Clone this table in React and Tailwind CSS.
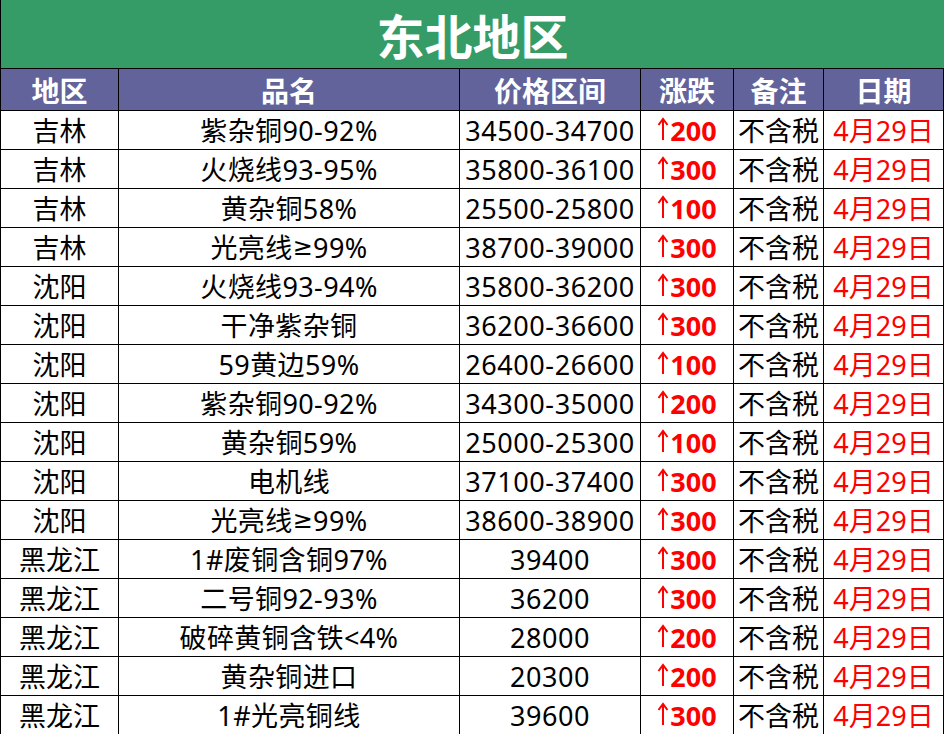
import React from "react";

const rows = [
  ["吉林", "紫杂铜90-92%", "34500-34700", "200"],
  ["吉林", "火烧线93-95%", "35800-36100", "300"],
  ["吉林", "黄杂铜58%", "25500-25800", "100"],
  ["吉林", "光亮线≥99%", "38700-39000", "300"],
  ["沈阳", "火烧线93-94%", "35800-36200", "300"],
  ["沈阳", "干净紫杂铜", "36200-36600", "300"],
  ["沈阳", "59黄边59%", "26400-26600", "100"],
  ["沈阳", "紫杂铜90-92%", "34300-35000", "200"],
  ["沈阳", "黄杂铜59%", "25000-25300", "100"],
  ["沈阳", "电机线", "37100-37400", "300"],
  ["沈阳", "光亮线≥99%", "38600-38900", "300"],
  ["黑龙江", "1#废铜含铜97%", "39400", "300"],
  ["黑龙江", "二号铜92-93%", "36200", "300"],
  ["黑龙江", "破碎黄铜含铁<4%", "28000", "200"],
  ["黑龙江", "黄杂铜进口", "20300", "200"],
  ["黑龙江", "1#光亮铜线", "39600", "300"],
];

const headers = ["地区", "品名", "价格区间", "涨跌", "备注", "日期"];

const cell =
  "h-[38px] bg-white flex items-center justify-center text-[27px] leading-none";

function Name({ text }) {
  const parts = text.split("≥");
  if (parts.length === 1) return <>{text}</>;
  return (
    <>
      {parts[0]}
      <span className="text-[24px]" style={{ fontFamily: '"DejaVu Sans", sans-serif' }}>
        ≥
      </span>
      {parts[1]}
    </>
  );
}

function Arrow() {
  return (
    <svg width="12" height="24" viewBox="0 0 12 24" className="mr-[1px] mt-[-2px]" fill="none">
      <path d="M6 2.5V23" stroke="#ff0000" strokeWidth="2" />
      <path d="M1.5 8L6 2L10.5 8" stroke="#ff0000" strokeWidth="2" strokeLinejoin="miter" />
    </svg>
  );
}

export default function App() {
  return (
    <div
      className="w-[944px] h-[735px] overflow-hidden bg-white"
      style={{ fontFamily: '"Noto Sans", "Noto Sans CJK SC", sans-serif' }}
    >
      <div
        className="h-[68px] bg-[#359b67] border-l border-black flex items-center justify-center text-white font-bold text-[48px] leading-none"
        style={{ fontFamily: '"Noto Sans CJK SC", sans-serif' }}
      >
        东北地区
      </div>
      <div className="grid grid-cols-[117px_340px_180px_92px_89px_119px] gap-px bg-black border-l border-r border-t border-black">
        {headers.map((h) => (
          <div
            key={h}
            className="h-[41px] bg-[#63639b] flex items-center justify-center text-white font-bold text-[28px] leading-none"
            style={{ fontFamily: '"Noto Sans CJK SC", sans-serif' }}
          >
            {h}
          </div>
        ))}
        {rows.map((r, i) => (
          <React.Fragment key={i}>
            <div className={`${cell} text-black`}>{r[0]}</div>
            <div className={`${cell} text-black tracking-[0.4px]`}>
              <Name text={r[1]} />
            </div>
            <div className={`${cell} text-black tracking-[0.6px]`}>{r[2]}</div>
            <div className={`${cell} text-[#ff0000]`}>
              <Arrow />
              <span className="font-bold">{r[3]}</span>
            </div>
            <div className={`${cell} text-black`}>不含税</div>
            <div className={`${cell} text-[#ff0000]`}>4月29日</div>
          </React.Fragment>
        ))}
      </div>
    </div>
  );
}
